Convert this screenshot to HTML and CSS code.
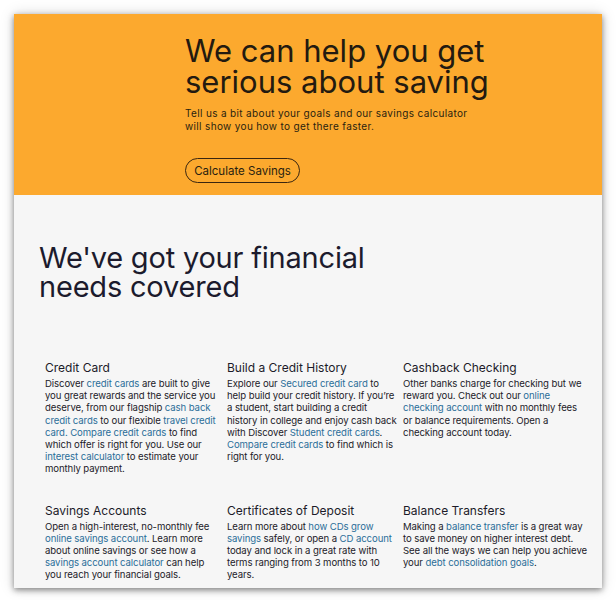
FILE: index.html
```html
<!DOCTYPE html>
<html>
<head>
<meta charset="utf-8">
<link rel="stylesheet" href="styles.css">
</head>
<body>
<div class="frame">
  <section class="hero">
    <h1 class="hero-title">We can help you get<br>serious about saving</h1>
    <p class="hero-sub">Tell us a bit about your goals and our savings calculator<br>will show you how to get there faster.</p>
    <a class="btn">Calculate Savings</a>
  </section>
  <section class="needs">
    <h2 class="needs-title">We've got your financial<br>needs covered</h2>
    <div class="grid">
      <div class="item">
        <h3>Credit Card</h3>
        <p>Discover <a>credit cards</a> are built to give you great rewards and the service you deserve, from our flagship <a>cash back credit cards</a> to our flexible <a>travel credit card. Compare credit cards</a> to find which offer is right for you. Use our <a>interest calculator</a> to estimate your monthly payment.</p>
      </div>
      <div class="item">
        <h3>Build a Credit History</h3>
        <p>Explore our <a>Secured credit card</a> to help build your credit history. If you’re a student, start building a credit history in college and enjoy cash back with Discover <a>Student credit cards</a>. <a>Compare credit cards</a> to find which is right for you.</p>
      </div>
      <div class="item">
        <h3>Cashback Checking</h3>
        <p>Other banks charge for checking but we reward you. Check out our <a>online checking account</a> with no monthly fees or balance requirements. Open a checking account today.</p>
      </div>
      <div class="item">
        <h3>Savings Accounts</h3>
        <p>Open a high-interest, no-monthly fee <a>online savings account</a>. Learn more about online savings or see how a <a>savings account calculator</a> can help you reach your financial goals.</p>
      </div>
      <div class="item">
        <h3>Certificates of Deposit</h3>
        <p>Learn more about <a>how CDs grow savings</a> safely, or open a <a>CD account</a> today and lock in a great rate with terms ranging from 3 months to 10 years.</p>
      </div>
      <div class="item">
        <h3>Balance Transfers</h3>
        <p>Making a <a>balance transfer</a> is a great way to save money on higher interest debt. See all the ways we can help you achieve your <a>debt consolidation goals</a>.</p>
      </div>
    </div>
  </section>
</div>
</body>
</html>
```
FILE: styles.css
```css
html, body {
  margin: 0;
  padding: 0;
  background: #ffffff;
}
body {
  font-family: Inter, "Noto Sans", "Liberation Sans", sans-serif;
  color: #1c1b29;
  padding: 14px 14px 0 14px;
  height: 600px;
  box-sizing: border-box;
  overflow: hidden;
}
.frame {
  width: 588px;
  height: 574px;
  background: #f6f6f6;
  box-shadow: 0 2px 6px rgba(0,0,0,0.45), 0 0 14px rgba(0,0,0,0.15);
  overflow: hidden;
}
.hero {
  background: #fca92e;
  height: 181px;
  box-sizing: border-box;
  padding: 21px 0 0 171px;
}
.hero-title {
  margin: 0;
  font-size: 31px;
  line-height: 31px;
  font-weight: 400;
  color: #231a10;
}
.hero-sub {
  margin: 10px 0 0 0;
  font-size: 10px;
  line-height: 13px;
  letter-spacing: 0.35px;
  color: #2a1f10;
}
.btn {
  display: inline-flex;
  align-items: center;
  justify-content: center;
  margin-top: 25px;
  width: 115px;
  height: 25px;
  box-sizing: border-box;
  border: 1px solid #3a2610;
  border-radius: 13px;
  font-size: 11.5px;
  color: #2a1f10;
}
.needs {
  padding: 48px 0 0 25px;
}
.needs-title {
  margin: 0;
  font-size: 29px;
  line-height: 29px;
  font-weight: 400;
  color: #1c1b2d;
  letter-spacing: -0.2px;
}
.grid {
  display: grid;
  grid-template-columns: 182px 176px 185px;
  row-gap: 27px;
  margin: 59px 0 0 6px;
}
.item {
  padding-right: 6px;
}
.item:nth-child(3n) {
  padding-right: 0;
}
.item h3 {
  margin: 0 0 3px 0;
  font-size: 12px;
  line-height: 15px;
  font-weight: 400;
  color: #1c1b29;
}
.item p {
  margin: 0;
  font-size: 9.6px;
  line-height: 12.2px;
  letter-spacing: -0.1px;
  color: #1c1b29;
}
.item a {
  color: #2b6e99;
}
```
